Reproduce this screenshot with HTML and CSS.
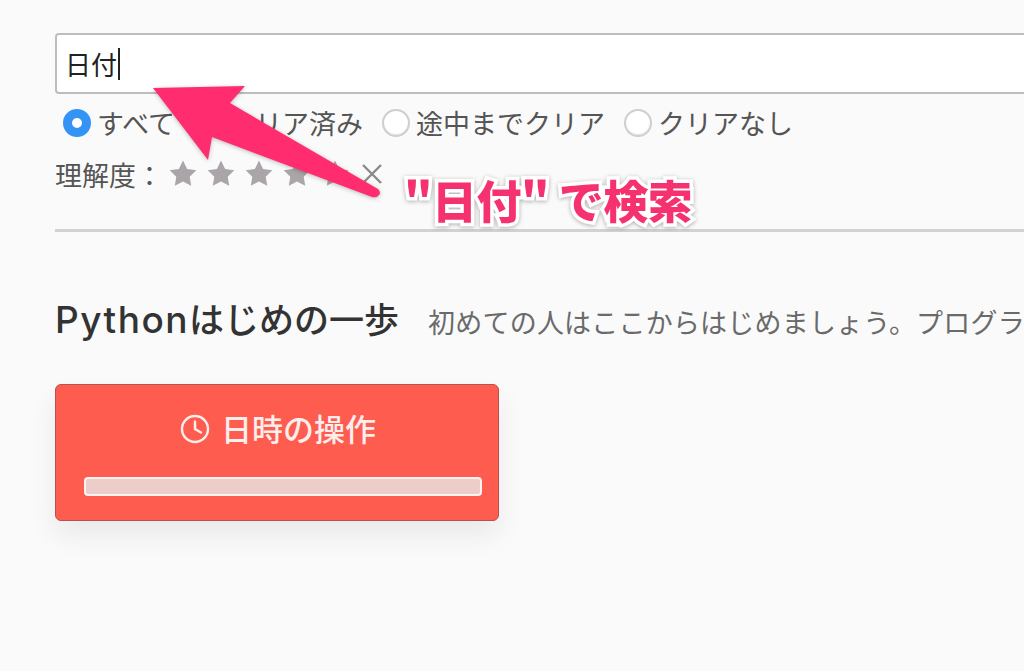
FILE: index.html
```html
<!DOCTYPE html>
<html lang="ja">
<head>
<meta charset="utf-8">
<title>検索</title>
<link rel="stylesheet" href="styles.css">
</head>
<body>
<main class="page">
  <section class="search">
    <div class="input"><span>日付</span><i class="caret"></i></div>
    <div class="radios">
      <label class="radio"><i class="dot on"></i>すべて</label>
      <label class="radio"><i class="dot hidden"></i>クリア済み</label>
      <label class="radio"><i class="dot"></i>途中までクリア</label>
      <label class="radio"><i class="dot"></i>クリアなし</label>
    </div>
    <div class="rating">
      <span class="rating-label">理解度：</span>
      <span class="stars">
        <svg class="star" viewBox="0 0 28 28"><path d="M14 .5L18.1 9 27.3 10.2 20.7 16.7 22.2 25.8 14 21.5 5.8 25.8 7.3 16.7 .7 10.2 9.9 9z"/></svg>
        <svg class="star" viewBox="0 0 28 28"><path d="M14 .5L18.1 9 27.3 10.2 20.7 16.7 22.2 25.8 14 21.5 5.8 25.8 7.3 16.7 .7 10.2 9.9 9z"/></svg>
        <svg class="star" viewBox="0 0 28 28"><path d="M14 .5L18.1 9 27.3 10.2 20.7 16.7 22.2 25.8 14 21.5 5.8 25.8 7.3 16.7 .7 10.2 9.9 9z"/></svg>
        <svg class="star" viewBox="0 0 28 28"><path d="M14 .5L18.1 9 27.3 10.2 20.7 16.7 22.2 25.8 14 21.5 5.8 25.8 7.3 16.7 .7 10.2 9.9 9z"/></svg>
        <svg class="star" viewBox="0 0 28 28"><path d="M14 .5L18.1 9 27.3 10.2 20.7 16.7 22.2 25.8 14 21.5 5.8 25.8 7.3 16.7 .7 10.2 9.9 9z"/></svg>
      </span>
      <svg class="clear" viewBox="0 0 22 22"><path d="M2 2l18 18M20 2L2 20"/></svg>
    </div>
  </section>
  <section class="course">
    <div class="course-head">
      <h2 class="course-title"><span class="latin">Python</span>はじめの一歩</h2>
      <p class="course-desc">初めての人はここからはじめましょう。プログラ</p>
    </div>
    <article class="card">
      <div class="card-title">
        <svg class="clock" viewBox="0 0 30 30"><circle cx="15" cy="15" r="13"/><path d="M15 7.5V15l6 3.5"/></svg>
        <span>日時の操作</span>
      </div>
      <div class="progress"></div>
    </article>
  </section>
</main>
<svg class="arrow" viewBox="0 0 1024 671" aria-hidden="true">
  <path d="M153 88L245 86 230 103 378 189Q382 193 378 196 376 198 372 197L212 137 208 160Z"/>
</svg>
<div class="note">"日付" で検索</div>
</body>
</html>
```

FILE: styles.css
```css
html, body {
  margin: 0;
  height: 671px;
  overflow: hidden;
  background: #fafafa;
}
body {
  position: relative;
  width: 1024px;
  font-family: "Noto Sans CJK JP", "Noto Sans", sans-serif;
  color: #555;
}
.page {
  padding: 33px 0 0 55px;
}
.search {
  width: 969px;
  height: 196px;
  border-bottom: 3px solid #d2d2d2;
  box-sizing: content-box;
}
.input {
  box-sizing: border-box;
  width: 1100px;
  height: 61px;
  border: 2px solid #bdbdbd;
  border-radius: 4px;
  background: #fff;
  display: flex;
  align-items: center;
  padding-left: 8px;
  font-size: 26px;
  color: #222;
}
.caret {
  display: block;
  width: 2px;
  height: 32px;
  margin-left: 1px;
  background: #222;
}
.radios {
  display: flex;
  align-items: center;
  gap: 19px;
  margin: 11px 0 0 8px;
  font-size: 27px;
  line-height: 36px;
}
.radio {
  display: flex;
  align-items: center;
  gap: 6px;
}
.dot {
  display: block;
  box-sizing: border-box;
  width: 28px;
  height: 28px;
  border-radius: 50%;
  background: #fff;
  border: 2px solid #cfcfcf;
  box-shadow: inset 0 -1px 1px #e6e6e6;
}
.dot.on {
  border: 9px solid #3394f5;
  box-shadow: none;
}
.dot.hidden {
  visibility: hidden;
}
.rating {
  display: flex;
  align-items: center;
  margin-top: 15px;
  height: 36px;
  font-size: 27px;
}
.rating-label {
  width: 114px;
  white-space: nowrap;
}
.stars {
  display: flex;
  gap: 10px;
}
.star {
  display: block;
  width: 28px;
  height: 28px;
  fill: #a9a5a9;
}
.clear {
  display: block;
  width: 22px;
  height: 22px;
  margin-left: 12px;
  fill: none;
  stroke: #8a8a8a;
  stroke-width: 2.4;
}
.course {
  margin-top: 62px;
}
.course-head {
  display: flex;
  align-items: baseline;
  gap: 29px;
  white-space: nowrap;
}
.course-title {
  margin: 0;
  font-size: 35px;
  line-height: 48px;
  font-weight: 500;
  color: #333;
  font-family: "Noto Sans CJK JP", sans-serif;
}
.latin {
  font-family: "Inter", sans-serif;
  font-size: 37px;
  letter-spacing: 1.5px;
}
.course-desc {
  margin: 0;
  font-size: 27px;
  letter-spacing: .2px;
  color: #6a6a6a;
}
.card {
  box-sizing: border-box;
  width: 444px;
  height: 137px;
  margin-top: 40px;
  padding: 22px 16px 24px 28px;
  background: #ff5c50;
  border: 1px solid #b9504a;
  border-radius: 6px;
  box-shadow: 0 14px 28px rgba(0, 0, 0, .07);
}
.card-title {
  display: flex;
  align-items: center;
  justify-content: center;
  gap: 13px;
  height: 40px;
  margin-right: 12px;
  font-size: 31px;
  font-weight: 500;
  color: #fbeeec;
}
.clock {
  display: block;
  width: 30px;
  height: 30px;
  margin: 4px -2px 0 2px;
  fill: none;
  stroke: #fbeeec;
  stroke-width: 2.4;
  stroke-linecap: round;
}
.progress {
  box-sizing: border-box;
  height: 19px;
  margin-top: 30px;
  background: #eccdca;
  border: 2px solid #fdf3f1;
  border-radius: 4px;
}
.arrow {
  position: absolute;
  left: 0;
  top: 0;
  width: 1024px;
  height: 671px;
  fill: #ff2d6f;
  filter: drop-shadow(0 1px 2px rgba(0, 0, 0, .25));
}
.note {
  position: absolute;
  left: 404px;
  top: 170px;
  font-size: 45px;
  line-height: 60px;
  font-weight: 900;
  letter-spacing: -.5px;
  white-space: nowrap;
  color: #f5316f;
  -webkit-text-stroke: 7px #fff;
  paint-order: stroke fill;
  filter: drop-shadow(0 1px 2px rgba(0, 0, 0, .3));
}
```
